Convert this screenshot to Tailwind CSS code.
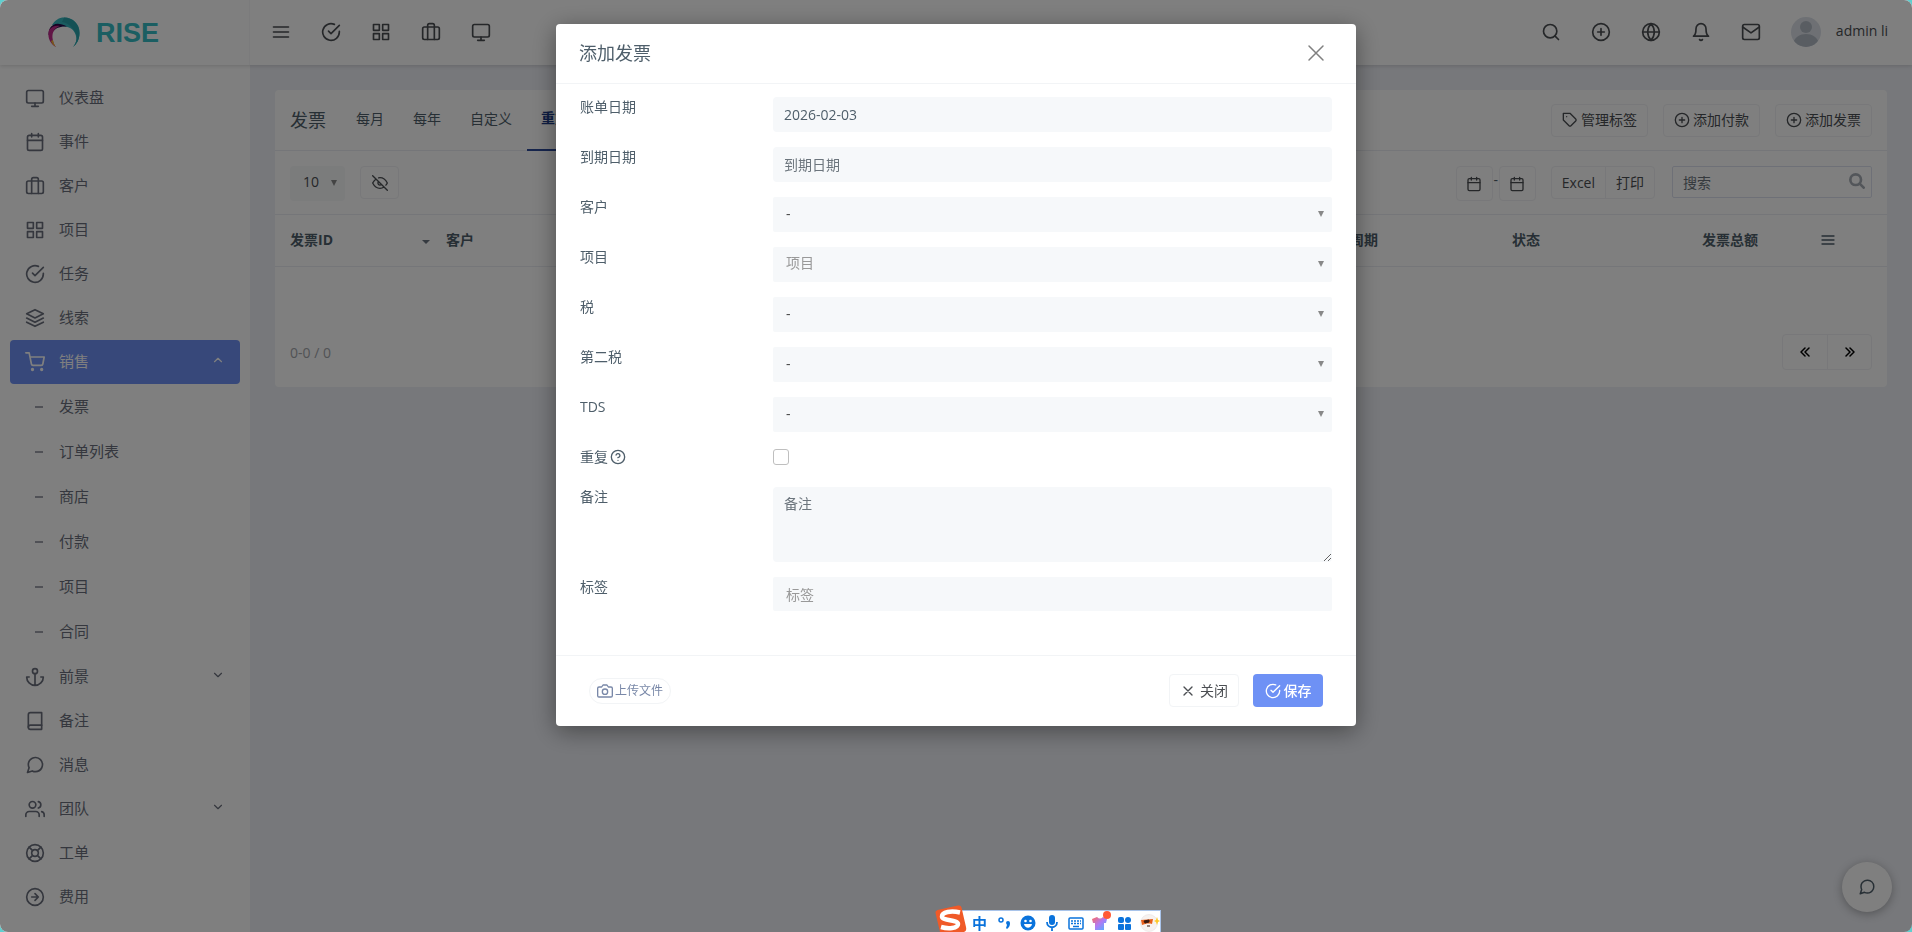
<!DOCTYPE html>
<html lang="zh-CN">

<head>
    <meta charset="UTF-8">
    <meta name="viewport" content="width=device-width, initial-scale=1.0">
    <script src="https://cdn.jsdelivr.net/npm/@tailwindcss/browser@4"></script>
    <title>RISE - 发票</title>
</head>

<body class="bg-[#5fcfcf] font-['Open_Sans','Noto_Sans_CJK_SC',sans-serif] text-sm text-[#4e5e6a]">
    <!-- Icon set -->
    <svg class="hidden" fill="none">
        <symbol id="i-menu" viewBox="0 0 24 24"><path d="M3 12h18M3 6h18M3 18h18" /></symbol>
        <symbol id="i-check" viewBox="0 0 24 24"><path d="M22 11.08V12a10 10 0 1 1-5.93-9.14" /><path d="M22 4L12 14.01l-3-3" /></symbol>
        <symbol id="i-grid" viewBox="0 0 24 24"><path d="M3 3h7v7H3zM14 3h7v7h-7zM14 14h7v7h-7zM3 14h7v7H3z" /></symbol>
        <symbol id="i-bag" viewBox="0 0 24 24"><rect x="2" y="6" width="20" height="15" rx="2" /><path d="M16 21V4a2 2 0 0 0-2-2h-4a2 2 0 0 0-2 2v17" /></symbol>
        <symbol id="i-monitor" viewBox="0 0 24 24"><rect x="2" y="3" width="20" height="15" rx="2" /><path d="M8 22h8M12 18v4" /></symbol>
        <symbol id="i-calendar" viewBox="0 0 24 24"><rect x="3" y="4" width="18" height="18" rx="2" /><path d="M16 2v4M8 2v4M3 10h18" /></symbol>
        <symbol id="i-layers" viewBox="0 0 24 24"><path d="M12 2L2 7l10 5 10-5-10-5zM2 17l10 5 10-5M2 12l10 5 10-5" /></symbol>
        <symbol id="i-cart" viewBox="0 0 24 24"><circle cx="9" cy="21" r="1" /><circle cx="20" cy="21" r="1" /><path d="M1 1h4l2.68 13.39a2 2 0 0 0 2 1.61h9.72a2 2 0 0 0 2-1.61L23 6H6" /></symbol>
        <symbol id="i-anchor" viewBox="0 0 24 24"><circle cx="12" cy="5" r="3" /><path d="M12 22V8M5 12H2a10 10 0 0 0 20 0h-3" /></symbol>
        <symbol id="i-book" viewBox="0 0 24 24"><path d="M4 19.5A2.5 2.5 0 0 1 6.500 17H20" /><path d="M6.500 2H20v20H6.500A2.500 2.500 0 0 1 4 19.500v-15A2.500 2.500 0 0 1 6.500 2z" /></symbol>
        <symbol id="i-chat" viewBox="0 0 24 24"><path d="M21 11.5a8.380 8.380 0 0 1-.9 3.800 8.500 8.500 0 0 1-7.600 4.700 8.380 8.380 0 0 1-3.800-.9L3 21l1.900-5.700a8.380 8.380 0 0 1-.9-3.800 8.500 8.500 0 0 1 4.700-7.600 8.380 8.380 0 0 1 3.800-.9h.5a8.480 8.480 0 0 1 8 8v.5z" /></symbol>
        <symbol id="i-users" viewBox="0 0 24 24"><path d="M17 21v-2a4 4 0 0 0-4-4H5a4 4 0 0 0-4 4v2" /><circle cx="9" cy="7" r="4" /><path d="M23 21v-2a4 4 0 0 0-3-3.870M16 3.130a4 4 0 0 1 0 7.750" /></symbol>
        <symbol id="i-life" viewBox="0 0 24 24"><circle cx="12" cy="12" r="10" /><circle cx="12" cy="12" r="4" /><path d="M4.930 4.930l4.240 4.240M14.830 14.830l4.240 4.240M14.830 9.170l4.240-4.240M4.930 19.070l4.240-4.240" /></symbol>
        <symbol id="i-arrow" viewBox="0 0 24 24"><circle cx="12" cy="12" r="10" /><path d="M12 16l4-4-4-4M8 12h8" /></symbol>
        <symbol id="i-up" viewBox="0 0 24 24"><path d="M18 15l-6-6-6 6" /></symbol>
        <symbol id="i-down" viewBox="0 0 24 24"><path d="M6 9l6 6 6-6" /></symbol>
        <symbol id="i-search" viewBox="0 0 24 24"><circle cx="11" cy="11" r="8" /><path d="M21 21l-4.350-4.350" /></symbol>
        <symbol id="i-plus" viewBox="0 0 24 24"><circle cx="12" cy="12" r="10" /><path d="M12 8v8M8 12h8" /></symbol>
        <symbol id="i-globe" viewBox="0 0 24 24"><circle cx="12" cy="12" r="10" /><path d="M2 12h20M12 2a15.300 15.300 0 0 1 4 10 15.300 15.300 0 0 1-4 10 15.300 15.300 0 0 1-4-10 15.300 15.300 0 0 1 4-10z" /></symbol>
        <symbol id="i-bell" viewBox="0 0 24 24"><path d="M18 8A6 6 0 0 0 6 8c0 7-3 9-3 9h18s-3-2-3-9M13.730 21a2 2 0 0 1-3.460 0" /></symbol>
        <symbol id="i-mail" viewBox="0 0 24 24"><rect x="2" y="3" width="20" height="18" rx="2" /><path d="M22 6l-10 7L2 6" /></symbol>
        <symbol id="i-tag" viewBox="0 0 24 24"><path d="M20.590 13.410l-7.170 7.170a2 2 0 0 1-2.830 0L2 12V2h10l8.590 8.590a2 2 0 0 1 0 2.820zM7 7h.01" /></symbol>
        <symbol id="i-eye-off" viewBox="0 0 24 24"><path d="M17.940 17.940A10.070 10.070 0 0 1 12 20c-7 0-11-8-11-8a18.450 18.450 0 0 1 5.060-5.940M9.900 4.240A9.120 9.120 0 0 1 12 4c7 0 11 8 11 8a18.500 18.500 0 0 1-2.160 3.190m-6.720-1.070a3 3 0 1 1-4.240-4.240M1 1l22 22" /></symbol>
        <symbol id="i-x" viewBox="0 0 24 24"><path d="M18 6L6 18M6 6l12 12" /></symbol>
        <symbol id="i-help" viewBox="0 0 24 24"><circle cx="12" cy="12" r="10" /><path d="M9.090 9a3 3 0 0 1 5.830 1c0 2-3 3-3 3M12 17h.01" /></symbol>
        <symbol id="i-camera" viewBox="0 0 24 24"><path d="M23 19a2 2 0 0 1-2 2H3a2 2 0 0 1-2-2V8a2 2 0 0 1 2-2h4l2-3h6l2 3h4a2 2 0 0 1 2 2z" /><circle cx="12" cy="13" r="4" /></symbol>
    </svg>

    <div class="h-screen flex flex-col rounded-lg overflow-hidden bg-[#eef0f6] [&_svg]:[stroke-linecap:round] [&_svg]:[stroke-linejoin:round]">
        <header class="relative z-10 h-[65px] shrink-0 flex items-center bg-white shadow-[0_1px_4px_rgba(0,0,0,0.15)]">
            <a href="#" class="w-[250px] h-full pl-12 flex items-center gap-4 border-r border-[#f6f6f8]">
                <svg class="w-8 h-8" viewBox="0 0 32 32">
                    <path d="M4 8C7 3 11 .5 16 .5 25 .5 31.500 7 31.500 16c0 6-2.500 11-6.500 14 3-4 4-7 3-11C26.500 13 22 9.500 16 9.500z" fill="#36b9c0" />
                    <path d="M16 .5C25 .5 31.500 7 31.500 16c0 6-2.500 11-6.500 14 4-5 5-10 2-15S20 6 14 5z" fill="#2ba3ab" />
                    <path d="M2 11C5 6 11 5 19 9.500 12 9 7 11 4 16L.5 18C.5 15 1 13 2 11z" fill="#2a0a4a" />
                    <path d="M1 13c3-4 7-5 11-4-6 2-8 7-7.500 12 .5 4 1.500 7 3.500 9C2 27-1 20 1 13z" fill="#c32a8c" />
                    <path d="M3 24c1 3 3 5 5 6-1.500-1.500-2.500-4-3-7z" fill="#f5b52e" />
                </svg>
                <span class="font-['Liberation_Sans',sans-serif] font-bold text-[27px] leading-8 text-[#37bcc4]">RISE</span>
            </a>
            <nav class="flex-1 flex items-center justify-between pl-[21px] pr-6 pb-[2px] text-[#4b4e52]">
                <div class="flex gap-[30px] fill-none stroke-current stroke-2">
                    <button type="button" aria-label="菜单"><svg class="w-5 h-5"><use href="#i-menu" /></svg></button>
                    <button type="button" aria-label="任务"><svg class="w-5 h-5"><use href="#i-check" /></svg></button>
                    <button type="button" aria-label="项目"><svg class="w-5 h-5"><use href="#i-grid" /></svg></button>
                    <button type="button" aria-label="客户"><svg class="w-5 h-5"><use href="#i-bag" /></svg></button>
                    <button type="button" aria-label="仪表盘"><svg class="w-5 h-5"><use href="#i-monitor" /></svg></button>
                </div>
                <div class="flex items-center gap-[30px] fill-none">
                    <button type="button" aria-label="搜索"><svg class="w-5 h-5 stroke-current stroke-2"><use href="#i-search" /></svg></button>
                    <button type="button" aria-label="添加"><svg class="w-5 h-5 stroke-current stroke-2"><use href="#i-plus" /></svg></button>
                    <button type="button" aria-label="语言"><svg class="w-5 h-5 stroke-current stroke-2"><use href="#i-globe" /></svg></button>
                    <button type="button" aria-label="通知"><svg class="w-5 h-5 stroke-current stroke-2"><use href="#i-bell" /></svg></button>
                    <button type="button" aria-label="邮件"><svg class="w-5 h-5 stroke-current stroke-2"><use href="#i-mail" /></svg></button>
                    <a href="#" class="flex items-center gap-[15px]">
                        <svg class="w-[30px] h-[30px] rounded-full" viewBox="0 0 30 30">
                            <rect width="30" height="30" fill="#dce1e9" />
                            <circle cx="15" cy="10" r="6" fill="#b2bac4" />
                            <path d="M2 26c2-6 7-9 13-9s11 3 13 9v4H2z" fill="#b2bac4" />
                        </svg>
                        <span class="pb-[2px]">admin li</span>
                    </a>
                </div>
            </nav>
        </header>

        <div class="flex-1 min-h-0 flex">
            <!-- Sidebar -->
            <aside class="w-[250px] shrink-0 bg-white px-[10px] pt-[11px] text-[15px] text-[#6a6f7c] overflow-hidden">
                <ul class="[&_a]:flex [&_a]:items-center [&_a]:h-11 [&_a]:px-[15px] [&_a]:gap-[14px] fill-none stroke-current stroke-2">
                    <li><a href="#"><svg class="w-5 h-5"><use href="#i-monitor" /></svg>仪表盘</a></li>
                    <li><a href="#"><svg class="w-5 h-5"><use href="#i-calendar" /></svg>事件</a></li>
                    <li><a href="#"><svg class="w-5 h-5"><use href="#i-bag" /></svg>客户</a></li>
                    <li><a href="#"><svg class="w-5 h-5"><use href="#i-grid" /></svg>项目</a></li>
                    <li><a href="#"><svg class="w-5 h-5"><use href="#i-check" /></svg>任务</a></li>
                    <li><a href="#"><svg class="w-5 h-5"><use href="#i-layers" /></svg>线索</a></li>
                    <li><a href="#" class="rounded-sm bg-[#6e91f5] text-white"><svg class="w-5 h-5"><use href="#i-cart" /></svg>销售<svg class="w-[14px] h-[14px] ml-auto mb-1"><use href="#i-up" /></svg></a></li>
                </ul>
                <ul class="pb-px [&_a]:flex [&_a]:items-center [&_a]:h-[45px] [&_a]:pl-[25px] [&_a]:gap-4">
                    <li><a href="#"><span class="w-2 h-0.5 bg-[#a0a3ad]"></span>发票</a></li>
                    <li><a href="#"><span class="w-2 h-0.5 bg-[#a0a3ad]"></span>订单列表</a></li>
                    <li><a href="#"><span class="w-2 h-0.5 bg-[#a0a3ad]"></span>商店</a></li>
                    <li><a href="#"><span class="w-2 h-0.5 bg-[#a0a3ad]"></span>付款</a></li>
                    <li><a href="#"><span class="w-2 h-0.5 bg-[#a0a3ad]"></span>项目</a></li>
                    <li><a href="#"><span class="w-2 h-0.5 bg-[#a0a3ad]"></span>合同</a></li>
                </ul>
                <ul class="[&_a]:flex [&_a]:items-center [&_a]:h-11 [&_a]:px-[15px] [&_a]:gap-[14px] fill-none stroke-current stroke-2">
                    <li><a href="#"><svg class="w-5 h-5"><use href="#i-anchor" /></svg>前景<svg class="w-[14px] h-[14px] ml-auto mb-1"><use href="#i-down" /></svg></a></li>
                    <li><a href="#"><svg class="w-5 h-5"><use href="#i-book" /></svg>备注</a></li>
                    <li><a href="#"><svg class="w-5 h-5"><use href="#i-chat" /></svg>消息</a></li>
                    <li><a href="#"><svg class="w-5 h-5"><use href="#i-users" /></svg>团队<svg class="w-[14px] h-[14px] ml-auto mb-1"><use href="#i-down" /></svg></a></li>
                    <li><a href="#"><svg class="w-5 h-5"><use href="#i-life" /></svg>工单</a></li>
                    <li><a href="#"><svg class="w-5 h-5"><use href="#i-arrow" /></svg>费用</a></li>
                </ul>
            </aside>

            <!-- Invoice list -->
            <main class="flex-1 min-w-0 p-[25px]">
                <section class="bg-white rounded-sm pb-[17px]">
                    <div class="h-[61px] px-[15px] flex items-center border-b border-[#ebedf2]">
                        <h1 class="text-lg w-[52px]">发票</h1>
                        <nav class="flex gap-px self-stretch text-[#4e5e6a] [&_a]:px-[14px] [&_a]:h-[61px] [&_a]:pb-1 [&_a]:flex [&_a]:items-center">
                            <a href="#">每月</a>
                            <a href="#">每年</a>
                            <a href="#">自定义</a>
                            <a href="#" class="font-semibold text-[#1b3a86] border-b-2 border-[#2c4a9a]">重复</a>
                        </nav>
                        <div class="ml-auto flex gap-[15px] text-[#4b4e52] [&_button]:h-[33px] [&_button]:px-[10px] [&_button]:border [&_button]:border-[#f0f1f4] [&_button]:rounded-sm [&_button]:flex [&_button]:items-center [&_button]:gap-[3px] fill-none stroke-current stroke-2">
                            <button type="button"><svg class="w-4 h-4"><use href="#i-tag" /></svg>管理标签</button>
                            <button type="button"><svg class="w-4 h-4"><use href="#i-plus" /></svg>添加付款</button>
                            <button type="button"><svg class="w-4 h-4"><use href="#i-plus" /></svg>添加发票</button>
                        </div>
                    </div>
                    <div class="h-16 px-[15px] pt-[15px] flex items-start border-b border-[#ebedf2]">
                        <div class="relative">
                            <select aria-label="每页条数" class="appearance-none w-[55px] h-[35px] pl-[13px] pb-[3px] bg-[#f6f8f9] rounded-sm text-[#4b4e52]">
                                <option>10</option>
                            </select>
                            <svg class="absolute right-2 top-[14px] w-[6px] h-[6px] pointer-events-none" viewBox="0 0 6 6"><path d="M0 0h6L3 6z" fill="#888" /></svg>
                        </div>
                        <button type="button" aria-label="隐藏列" class="ml-[15px] w-[39px] h-[33px] flex items-center justify-center border border-[#f0f1f4] rounded-sm text-[#4b4e52]"><svg class="w-4 h-4 fill-none stroke-current stroke-2"><use href="#i-eye-off" /></svg></button>
                        <div class="ml-auto flex">
                            <button type="button" aria-label="开始日期" class="w-[37px] h-[35px] flex items-center justify-center border border-[#f0f1f4] rounded-sm text-[#4b4e52]"><svg class="w-4 h-4 fill-none stroke-current stroke-2"><use href="#i-calendar" /></svg></button>
                            <span class="w-[6px] text-center leading-7">-</span>
                            <button type="button" aria-label="结束日期" class="w-[37px] h-[35px] flex items-center justify-center border border-[#f0f1f4] rounded-sm text-[#4b4e52]"><svg class="w-4 h-4 fill-none stroke-current stroke-2"><use href="#i-calendar" /></svg></button>
                        </div>
                        <div class="ml-[15px] h-[33px] flex border border-[#f0f1f4] rounded-sm text-[#4b4e52]">
                            <button type="button" class="px-[10px]">Excel</button>
                            <button type="button" class="px-[10px] border-l border-[#f0f1f4]">打印</button>
                        </div>
                        <div class="relative ml-[17px]">
                            <input type="search" aria-label="搜索" placeholder="搜索" class="w-[200px] h-8 px-[10px] border border-[#dde1ef] rounded-xs placeholder:text-[#6c757d]">
                            <svg class="absolute right-[7px] top-[7px] w-4 h-4 fill-none stroke-[#a6adb5] stroke-[4]" viewBox="0 0 24 24"><circle cx="10" cy="10" r="8" /><path d="M16 16l6 6" /></svg>
                        </div>
                    </div>
                    <table class="w-full table-fixed text-left">
                        <colgroup>
                            <col class="w-[156px]">
                            <col>
                            <col>
                            <col>
                            <col class="w-[190px]">
                            <col class="w-[143px]">
                            <col class="w-[133px]">
                            <col class="w-[114px]">
                        </colgroup>
                        <thead>
                            <tr class="h-[51px] border-b border-[#ebedf2] [&_th]:px-[15px] [&_th]:pb-px font-bold">
                                <th>
                                    <div class="flex items-center justify-between">发票ID<svg class="w-2 h-1 mt-1 -mr-[14px]" viewBox="0 0 8 4"><path d="M0 0h8L4 4z" fill="#6b7580" /></svg></div>
                                </th>
                                <th>客户</th>
                                <th>项目</th>
                                <th>下次重复</th>
                                <th>重复周期</th>
                                <th>状态</th>
                                <th class="text-right">发票总额</th>
                                <th><svg class="w-4 h-4 ml-8 fill-none stroke-current stroke-2"><use href="#i-menu" /></svg></th>
                            </tr>
                        </thead>
                        <tbody>
                            <tr class="h-[68px]">
                                <td colspan="8"></td>
                            </tr>
                        </tbody>
                    </table>
                    <div class="px-[15px] flex items-center justify-between">
                        <span class="text-[#a3a6ab] pt-0.5">0-0 / 0</span>
                        <div class="flex h-[36px] border border-[#f0f1f4] rounded-sm text-black">
                            <button type="button" aria-label="上一页" class="w-11 flex items-center justify-center"><svg class="w-[10px] h-[10px] fill-none stroke-current stroke-[1.5]" viewBox="0 0 10 10"><path d="M5 1L1 5l4 4M9 1L5 5l4 4" /></svg></button>
                            <button type="button" aria-label="下一页" class="w-11 flex items-center justify-center border-l border-[#f0f1f4]"><svg class="w-[10px] h-[10px] fill-none stroke-current stroke-[1.5]" viewBox="0 0 10 10"><path d="M1 1l4 4-4 4M5 1l4 4-4 4" /></svg></button>
                        </div>
                    </div>
                </section>
            </main>
        </div>

        <button type="button" aria-label="聊天" class="fixed right-5 bottom-5 w-[50px] h-[50px] rounded-full bg-white shadow-[0_2px_10px_rgba(0,0,0,0.3)] flex items-center justify-center"><svg class="w-[18px] h-[18px] fill-none stroke-[#4e5e6a] stroke-2"><use href="#i-chat" /></svg></button>

        <!-- Add invoice modal -->
        <div class="fixed inset-0 z-20 rounded-lg bg-black/50 flex items-start justify-center pt-6">
            <form class="w-[800px] bg-white rounded-sm shadow-[0_5px_25px_rgba(0,0,0,0.4)]">
                <div class="h-[60px] pl-[23px] pr-6 pb-px flex items-center justify-between border-b border-[#f2f4f6]">
                    <h2 class="text-lg">添加发票</h2>
                    <button type="button" aria-label="关闭" class="mr-1 text-[#808080]"><svg class="w-6 h-6 fill-none stroke-current stroke-[1.5]" viewBox="0 0 24 24"><path d="M5 5l14 14M19 5L5 19" /></svg></button>
                </div>
                <div class="px-6 pt-[13px] pb-11 flex flex-col gap-[15px] [&>div]:grid [&>div]:grid-cols-[193px_1fr] [&>div]:items-start [&_label]:leading-5">
                    <div>
                        <label for="bill_date">账单日期</label>
                        <input type="text" id="bill_date" value="2026-02-03" class="w-full h-[35px] px-[11px] bg-[#f6f8fa] rounded-sm">
                    </div>
                    <div>
                        <label for="due_date">到期日期</label>
                        <input type="text" id="due_date" placeholder="到期日期" class="w-full h-[35px] px-[11px] bg-[#f6f8fa] rounded-sm placeholder:text-[#6c757d]">
                    </div>
                    <div>
                        <label for="client">客户</label>
                        <div class="relative">
                            <select id="client" class="appearance-none w-full h-[35px] px-[13px] pb-px bg-[#f6f8fa] rounded-xs text-[#444]"><option>-</option></select>
                            <svg class="absolute right-2 top-[14px] w-[6px] h-[6px] pointer-events-none" viewBox="0 0 6 6"><path d="M0 0h6L3 6z" fill="#888" /></svg>
                        </div>
                    </div>
                    <div>
                        <label for="project">项目</label>
                        <div class="relative">
                            <select id="project" class="appearance-none w-full h-[35px] px-[13px] pb-[3px] bg-[#f6f8fa] rounded-xs text-[#999]"><option>项目</option></select>
                            <svg class="absolute right-2 top-[14px] w-[6px] h-[6px] pointer-events-none" viewBox="0 0 6 6"><path d="M0 0h6L3 6z" fill="#888" /></svg>
                        </div>
                    </div>
                    <div>
                        <label for="tax">税</label>
                        <div class="relative">
                            <select id="tax" class="appearance-none w-full h-[35px] px-[13px] pb-px bg-[#f6f8fa] rounded-xs text-[#444]"><option>-</option></select>
                            <svg class="absolute right-2 top-[14px] w-[6px] h-[6px] pointer-events-none" viewBox="0 0 6 6"><path d="M0 0h6L3 6z" fill="#888" /></svg>
                        </div>
                    </div>
                    <div>
                        <label for="tax2">第二税</label>
                        <div class="relative">
                            <select id="tax2" class="appearance-none w-full h-[35px] px-[13px] pb-px bg-[#f6f8fa] rounded-xs text-[#444]"><option>-</option></select>
                            <svg class="absolute right-2 top-[14px] w-[6px] h-[6px] pointer-events-none" viewBox="0 0 6 6"><path d="M0 0h6L3 6z" fill="#888" /></svg>
                        </div>
                    </div>
                    <div>
                        <label for="tds">TDS</label>
                        <div class="relative">
                            <select id="tds" class="appearance-none w-full h-[35px] px-[13px] pb-px bg-[#f6f8fa] rounded-xs text-[#444]"><option>-</option></select>
                            <svg class="absolute right-2 top-[14px] w-[6px] h-[6px] pointer-events-none" viewBox="0 0 6 6"><path d="M0 0h6L3 6z" fill="#888" /></svg>
                        </div>
                    </div>
                    <div class="h-[25px]">
                        <label for="recurring" class="flex items-center gap-[2px]">重复<svg class="w-4 h-4 fill-none stroke-current stroke-2"><use href="#i-help" /></svg></label>
                        <input type="checkbox" id="recurring" class="appearance-none w-4 h-4 mt-0.5 border border-[#bfbfbf] rounded-[3px] bg-white">
                    </div>
                    <div>
                        <label for="note">备注</label>
                        <textarea id="note" placeholder="备注" class="block w-full h-[75px] px-[11px] py-[7px] leading-5 bg-[#f6f8fa] rounded-sm resize-y placeholder:text-[#6c757d]"></textarea>
                    </div>
                    <div>
                        <label for="labels">标签</label>
                        <input type="text" id="labels" placeholder="标签" class="w-full h-[34px] px-[13px] bg-[#f6f8fa] rounded-xs placeholder:text-[#999]">
                    </div>
                </div>
                <div class="h-[71px] px-[33px] pb-px flex items-center border-t border-[#f2f4f6]">
                    <button type="button" class="h-[26px] px-[7px] flex items-center gap-[2px] border border-[#f2f4f6] rounded-full text-xs text-[#7988a8]"><svg class="w-4 h-4 fill-none stroke-current stroke-2"><use href="#i-camera" /></svg>上传文件</button>
                    <button type="button" class="ml-auto w-[70px] h-[33px] flex items-center justify-center gap-1 border border-[#f2f4f6] rounded-sm text-[#4b4e52]"><svg class="w-4 h-4 fill-none stroke-current stroke-2"><use href="#i-x" /></svg>关闭</button>
                    <button type="submit" class="ml-[14px] w-[70px] h-[33px] flex items-center justify-center gap-[3px] rounded-sm bg-[#6e91f5] text-white font-medium"><svg class="w-4 h-4 fill-none stroke-current stroke-2"><use href="#i-check" /></svg>保存</button>
                </div>
            </form>
        </div>
    </div>

    <!-- Input method bar -->
    <div class="fixed z-30 left-[935px] bottom-0 h-[22px] w-[226px] flex items-center gap-2 pl-[37px] pt-[3px] text-[#0a73dc] [&>svg]:shrink-0">
        <div class="absolute inset-y-0 right-0 left-[25px] -z-10 bg-white border-t border-r border-[#a9c4ea]"></div>
        <svg class="absolute left-0 bottom-0 w-8 h-[27px]" viewBox="0 0 32 27">
            <path d="M.5 8Q0 6 2.500 5L23 .5q3-.5 3.500 2L31 22q1 4-2 5H5z" fill="#f05a28" />
            <path d="M25 7.500C16 5.500 7 7 7 11.500s16 3 16 7.500-10 5-17 3" fill="none" stroke="#fff" stroke-width="4.500" />
        </svg>
        <span class="w-4 shrink-0 text-[15px] leading-5 font-bold">中</span>
        <svg class="w-4 h-4" viewBox="0 0 16 16"><circle cx="5" cy="5" r="2" fill="none" stroke="currentColor" stroke-width="1.500" /><path d="M10 8a2 2 0 0 1 4 0c0 3-1 4-3 6l-1-1 1-3z" fill="currentColor" /></svg>
        <svg class="w-4 h-4" viewBox="0 0 16 16"><circle cx="8" cy="8" r="7.500" fill="currentColor" /><circle cx="5.500" cy="6" r="1.300" fill="#fff" /><circle cx="10.500" cy="6" r="1.300" fill="#fff" /><path d="M4 9h8c-1 5-7 5-8 0z" fill="#fff" /></svg>
        <svg class="w-4 h-4" viewBox="0 0 16 16"><rect x="5" y="0" width="6" height="10" rx="3" fill="currentColor" /><path d="M3 7c0 7 10 7 10 0M8 12v4" fill="none" stroke="currentColor" stroke-width="1.800" /></svg>
        <svg class="w-4 h-4" viewBox="0 0 16 16"><rect x="1" y="3" width="14" height="11" rx="1" fill="none" stroke="currentColor" stroke-width="1.500" /><path d="M3 6h10M3 8.500h10" stroke="currentColor" stroke-width="1.500" stroke-dasharray="2 1" /><path d="M5 11.500h6" stroke="currentColor" stroke-width="1.500" /></svg>
        <svg class="w-4 h-4 overflow-visible" viewBox="0 0 16 16">
            <defs><linearGradient id="shirt" x1="0" y1="0" x2="1" y2="1"><stop offset="0" stop-color="#ff6a5c" /><stop offset=".5" stop-color="#b07af5" /><stop offset="1" stop-color="#45b6ff" /></linearGradient></defs>
            <path d="M5 2c2 2 4 2 6 0l4 2-1 4h-2v7H3V8H1L0 4z" fill="url(#shirt)" />
            <circle cx="15" cy="0" r="4" fill="#ff5a36" />
        </svg>
        <svg class="w-4 h-4" viewBox="0 0 16 16" fill="currentColor"><rect x="2" y="2" width="6" height="6" rx="2" /><circle cx="12" cy="5" r="3" /><rect x="2" y="9" width="6" height="6" rx="1" /><rect x="9" y="9" width="6" height="6" rx="1" /></svg>
        <svg class="w-5 h-5" viewBox="0 0 20 20"><circle cx="9" cy="10" r="8.500" fill="#f7f2f0" stroke="#e3dcdc" stroke-width=".5" /><path d="M1 7l12-1-1 5c-4-1-7 0-10 1z" fill="#e8601c" /><path d="M4 8l5-1v2l-4 1zM7 13h3" fill="#3a1a10" stroke="#3a1a10" /><path d="M17 4l1 3 2 1-2 1-1 3-1-3-2-1 2-1z" fill="#ffc928" /></svg>
    </div>
</body>

</html>
